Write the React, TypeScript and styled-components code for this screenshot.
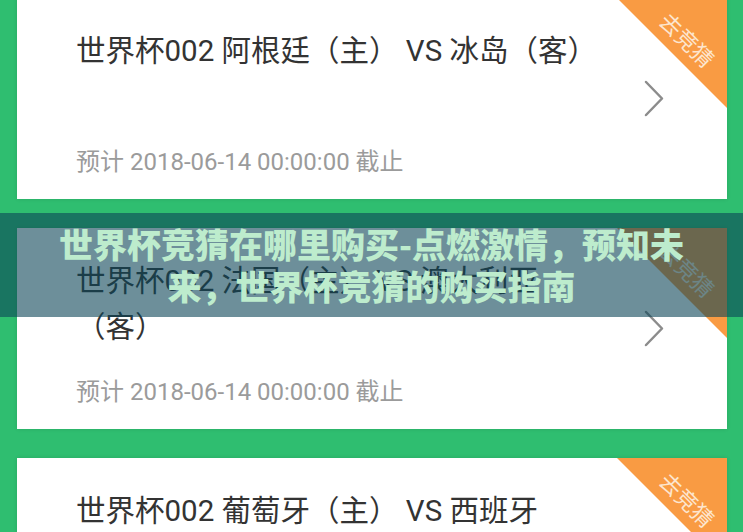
import styled, { createGlobalStyle } from "styled-components";

interface Match {
  id: number;
  title: string;
  deadline: string;
}

const matches: Match[] = [
  { id: 1, title: "世界杯002 阿根廷（主） VS 冰岛（客）", deadline: "预计 2018-06-14 00:00:00 截止" },
  { id: 2, title: "世界杯002 法国（主） VS 澳大利亚（客）", deadline: "预计 2018-06-14 00:00:00 截止" },
  { id: 3, title: "世界杯002 葡萄牙（主） VS 西班牙", deadline: "预计 2018-06-14 00:00:00 截止" },
];

const GlobalStyle = createGlobalStyle`
  html, body {
    margin: 0;
    padding: 0;
    background-color: #2fbe70;
  }
`;

export default function App() {
  return (
    <>
      <GlobalStyle />
      <Page>
        <List>
          {matches.map((m) => (
            <Card key={m.id}>
              <Body>
                <Title>{m.title}</Title>
                <Deadline>{m.deadline}</Deadline>
              </Body>
              <Chevron viewBox="0 0 20 37" aria-hidden="true">
                <polyline points="2,2 18,18.5 2,35" />
              </Chevron>
              <Ribbon>
                <RibbonLabel>去竞猜</RibbonLabel>
              </Ribbon>
            </Card>
          ))}
        </List>
        <Banner>
          <BannerText>世界杯竞猜在哪里购买-点燃激情，预知未来，世界杯竞猜的购买指南</BannerText>
        </Banner>
      </Page>
    </>
  );
}

const Page = styled.div`
  position: relative;
  height: 532px;
  overflow: hidden;
  background-color: #2fbe70;
`;

const List = styled.ul`
  list-style: none;
  margin: -2px 0 0;
  padding: 0 16px 0 17px;
  display: flex;
  flex-direction: column;
  gap: 29px;
`;

const Card = styled.li`
  position: relative;
  display: flex;
  align-items: center;
  height: 201px;
  background-color: #ffffff;
  box-shadow: 0 0 4px rgba(0, 0, 0, 0.12);
  overflow: hidden;
`;

const Body = styled.div`
  flex: 1;
  align-self: stretch;
  display: flex;
  flex-direction: column;
  padding: 30px 0 22px 59px;
`;

const Title = styled.h3`
  margin: 0;
  max-width: 530px;
  font-family: Roboto, "Noto Sans CJK SC", sans-serif;
  font-size: 29.5px;
  font-weight: 400;
  line-height: 46px;
  color: #333333;
`;

const Deadline = styled.p`
  margin: auto 0 0;
  font-family: Roboto, "Noto Sans CJK SC", sans-serif;
  font-size: 24px;
  line-height: 30px;
  color: #9b9b9b;
`;

const Chevron = styled.svg`
  width: 20px;
  height: 37px;
  margin-right: 63px;
  flex-shrink: 0;

  polyline {
    fill: none;
    stroke: #8c8c8c;
    stroke-width: 2.5;
    stroke-linecap: round;
    stroke-linejoin: round;
  }
`;

const Ribbon = styled.div`
  position: absolute;
  top: 0;
  right: 0;
  width: 110px;
  height: 110px;
  background-color: #f99b43;
  clip-path: polygon(0 0, 100% 0, 100% 100%);
`;

const RibbonLabel = styled.span`
  position: absolute;
  left: 71px;
  top: 41px;
  transform: translate(-50%, -50%) rotate(45deg);
  white-space: nowrap;
  font-family: "Noto Sans CJK SC", sans-serif;
  font-size: 22px;
  line-height: 1;
  color: #fde6cf;
`;

const Banner = styled.div`
  position: absolute;
  top: 213px;
  left: 0;
  right: 0;
  height: 104px;
  display: flex;
  align-items: center;
  justify-content: center;
  background-color: rgba(12, 68, 86, 0.6);
`;

const BannerText = styled.h1`
  margin: 0;
  max-width: 640px;
  text-align: center;
  font-family: "Noto Sans CJK SC", sans-serif;
  font-size: 34px;
  font-weight: 900;
  line-height: 42px;
  color: #bdeccd;
`;
